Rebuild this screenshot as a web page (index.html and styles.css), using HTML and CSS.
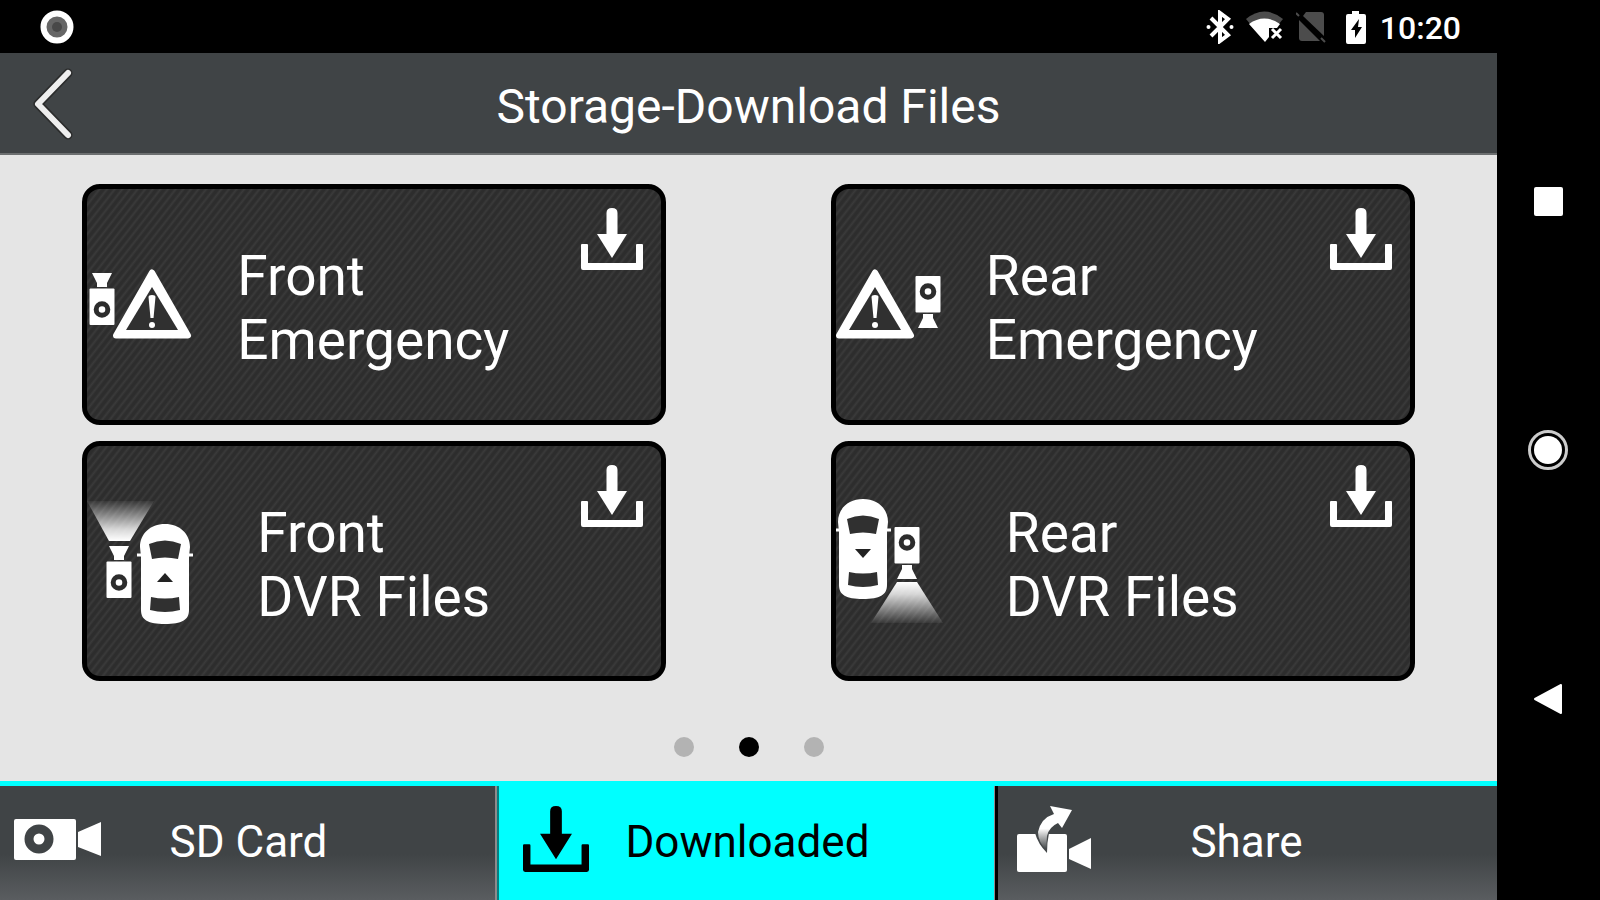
FILE: index.html
```
<!DOCTYPE html>
<html lang="en">
<head>
    <meta charset="UTF-8">
    <meta name="viewport" content="width=device-width, initial-scale=1.0">
    <title>Storage-Download Files</title>
    <link rel="stylesheet" href="styles.css">
</head>
<body>
    <!-- Shared icons -->
    <svg class="sprite" width="0" height="0" aria-hidden="true">
        <defs>
            <linearGradient id="beam" x1="0" y1="1" x2="0" y2="0">
                <stop offset="0" stop-color="#fff"/>
                <stop offset="0.3" stop-color="#fff" stop-opacity="0.8"/>
                <stop offset="1" stop-color="#fff" stop-opacity="0.05"/>
            </linearGradient>
            <linearGradient id="tail" x1="0" y1="0" x2="0" y2="1">
                <stop offset="0.5" stop-color="#fff"/>
                <stop offset="0.95" stop-color="#44484a"/>
            </linearGradient>
            <symbol id="download" viewBox="0 0 62 62">
                <path fill="currentColor" d="M31 0q5.500 0 5.500 5V26H46L31 50 16 26h9.500V5q0-5 5.500-5z"/>
                <path fill="currentColor" d="M0 37q0-1 1-1h5q1 0 1 1v18h48V37q0-1 1-1h5q1 0 1 1v23q0 2-2 2H2q-2 0-2-2z"/>
            </symbol>
            <g id="camera">
                <path fill="#fff" d="M-10-26H10L5-16V-12H-5V-16z"/>
                <rect fill="#fff" x="-12.500" y="-10.500" width="25" height="36.500" rx="1"/>
                <circle cx="0" cy="10.500" r="5.800" fill="#fff" stroke="#2c2c2c" stroke-width="5"/>
            </g>
            <g id="warning">
                <path fill="#fff" stroke="#fff" stroke-width="6" stroke-linejoin="round" d="M39 38.500L75 101.500H3z"/>
                <path fill="#303030" d="M39 53L65 96H13z"/>
                <path fill="#fff" d="M35.500 63q0-2 3.500-2t3.500 2l-2 21h-3z"/>
                <circle fill="#fff" cx="39" cy="91" r="3"/>
            </g>
            <g id="car">
                <path fill="#fff" d="M0-50C15-50 25-40 25-27L24-17V36C24 46 17 50 0 50S-24 46-24 36V-17L-25-27C-25-40-15-50 0-50z"/>
                <path stroke="#fff" stroke-width="3" d="M-28-19H28"/>
                <path fill="#303030" d="M-16-30Q0-37 16-30L13-15Q0-18-13-15z"/>
                <path fill="#303030" d="M-14 23Q0 26 14 23L15 36Q0 40-15 36z"/>
            </g>
        </defs>
    </svg>

    <div class="screen">
        <div class="app">
            <div class="status-bar">
                <svg class="record" width="34" height="34" viewBox="0 0 34 34" aria-hidden="true">
                    <circle cx="17" cy="17" r="13.500" fill="#666" stroke="#fff" stroke-width="6"/>
                    <circle cx="17" cy="17" r="5" fill="#484848"/>
                </svg>
                <svg width="28" height="34" viewBox="0 0 28 34" aria-hidden="true">
                    <path fill="none" stroke="#fff" stroke-width="4" d="M5 8L22 25 14 31V3L22 9 5 26"/>
                    <circle cx="2.500" cy="17" r="2" fill="#fff"/>
                    <circle cx="25.500" cy="17" r="2" fill="#fff"/>
                </svg>
                <svg width="38" height="34" viewBox="0 0 38 34" aria-hidden="true">
                    <path fill="#4c4c4c" d="M0 9Q18-6 37 9L32 15H5z"/>
                    <path fill="#fff" d="M3 14Q18 3 34 14L31 18H23V27L19 32z"/>
                    <path stroke="#fff" stroke-width="3" d="M26 19L35 28M35 19L26 28"/>
                </svg>
                <svg width="38" height="34" viewBox="0 0 38 34" aria-hidden="true">
                    <path fill="#4c4c4c" d="M10 2H25q3 0 3 3V26L7 6z"/>
                    <path fill="#4c4c4c" d="M3 10L24 31H6q-3 0-3-3z"/>
                    <path stroke="#4c4c4c" stroke-width="2" d="M0 3L3 6M25 28L29 32"/>
                </svg>
                <svg width="22" height="34" viewBox="0 0 22 34" aria-hidden="true">
                    <path fill="#fff" d="M6 1h7v3h5q2 0 2 2v26q0 2-2 2H2q-2 0-2-2V6q0-2 2-2h4z"/>
                    <path fill="#000" d="M13 9L5 20h4v8l7-11h-4z"/>
                </svg>
                <time class="clock">10:20</time>
            </div>

            <header class="title-bar">
                <button class="back" type="button" aria-label="Back">
                    <svg width="50" height="76" viewBox="0 0 50 76" aria-hidden="true">
                        <path fill="none" stroke="#2b2c2c" stroke-width="9" stroke-linecap="round" stroke-linejoin="round" d="M42 8L12 39 42 70"/>
                        <path fill="none" stroke="#eee" stroke-width="6" stroke-linecap="round" stroke-linejoin="round" d="M42 8L12 39 42 70"/>
                    </svg>
                </button>
                <h1>Storage-Download Files</h1>
            </header>

            <main>
                <div class="cards">
                    <button class="card" type="button">
                        <svg class="card-icon" width="110" height="140" viewBox="0 0 110 140" aria-hidden="true">
                            <use href="#camera" x="15" y="65"/>
                            <use href="#warning" x="26"/>
                        </svg>
                        <span class="card-text">Front<br>Emergency</span>
                        <svg class="card-download" width="62" height="62" aria-hidden="true"><use href="#download"/></svg>
                    </button>
                    <button class="card" type="button">
                        <svg class="card-icon" width="110" height="140" viewBox="0 0 110 140" aria-hidden="true">
                            <use href="#warning"/>
                            <use href="#camera" transform="translate(92 68) rotate(180)"/>
                        </svg>
                        <span class="card-text">Rear<br>Emergency</span>
                        <svg class="card-download" width="62" height="62" aria-hidden="true"><use href="#download"/></svg>
                    </button>
                    <button class="card dvr" type="button">
                        <svg class="card-icon" width="110" height="140" viewBox="0 0 110 140" aria-hidden="true">
                            <path fill="url(#beam)" d="M0 10H67L43 50H22z"/>
                            <use href="#camera" x="32" y="81"/>
                            <use href="#car" x="78" y="83"/>
                            <path fill="#222" d="M78 82L86 91H70z"/>
                        </svg>
                        <span class="card-text">Front<br>DVR Files</span>
                        <svg class="card-download" width="62" height="62" aria-hidden="true"><use href="#download"/></svg>
                    </button>
                    <button class="card dvr" type="button">
                        <svg class="card-icon" width="110" height="140" viewBox="0 0 110 140" aria-hidden="true">
                            <path fill="url(#beam)" transform="translate(71 111) rotate(180)" d="M-36-21H36L10 20H-10z"/>
                            <use href="#camera" transform="translate(71 62) rotate(180)"/>
                            <use href="#car" x="27" y="58"/>
                            <path fill="#222" d="M27 67L35 58H19z"/>
                        </svg>
                        <span class="card-text">Rear<br>DVR Files</span>
                        <svg class="card-download" width="62" height="62" aria-hidden="true"><use href="#download"/></svg>
                    </button>
                </div>
                <div class="pager">
                    <button class="dot" type="button" aria-label="Page 1"></button>
                    <button class="dot active" type="button" aria-label="Page 2"></button>
                    <button class="dot" type="button" aria-label="Page 3"></button>
                </div>
            </main>

            <nav class="tabs">
                <button class="tab" type="button">
                    <svg width="110" height="114" viewBox="0 0 110 114" aria-hidden="true">
                        <rect x="14" y="33" width="62" height="41" rx="2" fill="#fff"/>
                        <circle cx="39" cy="53" r="10" fill="#fff" stroke="#404446" stroke-width="9"/>
                        <path fill="#fff" d="M78 46L101 36V70L78 61z"/>
                    </svg>
                    <span>SD Card</span>
                </button>
                <button class="tab selected" type="button">
                    <svg width="110" height="114" viewBox="0 0 110 114" aria-hidden="true">
                        <use href="#download" x="24" y="20" width="66" height="66"/>
                    </svg>
                    <span>Downloaded</span>
                </button>
                <button class="tab" type="button">
                    <svg width="110" height="114" viewBox="0 0 110 114" aria-hidden="true">
                        <rect x="19" y="48" width="50" height="38" rx="2" fill="#fff"/>
                        <path fill="#fff" d="M71 63L93 52V83L71 73z"/>
                        <path fill="#44484a" d="M37 47Q40 58 49 67Q49 56 51 47z"/>
                        <path fill="url(#tail)" d="M52 20L74 24 64 42 60 37Q51 41 49 50 48 57 49 65 40 56 40 46 43 32 56 28z"/>
                    </svg>
                    <span>Share</span>
                </button>
            </nav>
        </div>

        <nav class="system-nav">
            <button type="button" aria-label="Recent apps">
                <svg width="42" height="42" viewBox="0 0 42 42" aria-hidden="true"><rect x="6" y="7" width="29" height="29" rx="2" fill="#fff"/></svg>
            </button>
            <button type="button" aria-label="Home">
                <svg width="42" height="42" viewBox="0 0 42 42" aria-hidden="true">
                    <circle cx="20" cy="21" r="18.500" fill="none" stroke="#ccc" stroke-width="3"/>
                    <circle cx="20" cy="21" r="14" fill="#fff"/>
                </svg>
            </button>
            <button type="button" aria-label="Back">
                <svg width="42" height="42" viewBox="0 0 42 42" aria-hidden="true"><path fill="#fff" stroke="#fff" stroke-width="2" stroke-linejoin="round" d="M7 21L33 7V35z"/></svg>
            </button>
        </nav>
    </div>
</body>
</html>
```
FILE: styles.css
```
* {
  box-sizing: border-box;
}

body {
  margin: 0;
  background: #000;
  color: #fff;
  font-family: Roboto, "Liberation Sans", sans-serif;
}

button {
  margin: 0;
  padding: 0;
  border: none;
  background: none;
  color: inherit;
  font: inherit;
  cursor: pointer;
}

svg {
  display: block;
  flex-shrink: 0;
}

.sprite {
  position: absolute;
}

.screen {
  display: grid;
  grid-template-columns: 1fr 103px;
  min-height: 100vh;
}

.app {
  display: flex;
  flex-direction: column;
}

/* Status Bar */
.status-bar {
  display: flex;
  align-items: center;
  gap: 12px;
  height: 53px;
  padding: 0 36px 0 40px;
}

.record {
  margin-right: auto;
}

.clock {
  font-size: 32px;
  font-weight: 500;
  padding-top: 3px;
}

/* Title Bar */
.title-bar {
  display: grid;
  grid-template-columns: 1fr auto 1fr;
  align-items: center;
  height: 102px;
  padding: 0 26px;
  background: #404446;
  border-bottom: 2px solid #6c6f70;
}

.back {
  justify-self: start;
}

.title-bar h1 {
  margin: 0;
  padding-top: 6px;
  font-size: 48px;
  font-weight: 400;
}

/* Cards */
main {
  flex: 1;
  display: flex;
  flex-direction: column;
  padding: 29px 0 24px;
  background: #e5e5e5;
}

.cards {
  flex: 1;
  display: grid;
  grid-template-columns: 1fr 1fr;
  grid-auto-rows: 1fr;
  row-gap: 16px;
}

.card {
  display: flex;
  align-items: center;
  gap: 40px;
  width: 78%;
  margin: 0 auto;
  padding-right: 18px;
  border: 5px solid #000;
  border-radius: 18px;
  background: repeating-linear-gradient(128deg, #2d2d2d 0, #2d2d2d 2px, #3a3a3a 4px, #2d2d2d 6px);
  text-align: left;
}

.card.dvr {
  gap: 60px;
}

.card-text {
  flex: 1;
  padding-top: 8px;
  font-size: 55px;
  line-height: 64px;
}

.card-download {
  align-self: flex-start;
  margin-top: 19px;
}

/* Page Dots */
.pager {
  display: flex;
  justify-content: center;
  gap: 45px;
  margin-top: 56px;
}

.dot {
  width: 20px;
  height: 20px;
  border-radius: 50%;
  background: #b3b3b3;
}

.dot.active {
  background: #000;
}

/* Bottom Tabs */
.tabs {
  display: grid;
  grid-template-columns: 1fr 1fr 1fr;
  border-top: 5px solid #0ff;
}

.tab {
  display: grid;
  grid-template-columns: 1fr auto 1fr;
  align-items: center;
  padding-right: 2px;
  background: linear-gradient(#404446 60%, #5a5d60);
  font-size: 44px;
}

.tab span {
  padding-bottom: 2px;
}

.tab:first-child {
  box-shadow: inset -2px 0 #087f80, inset -4px 0 #8f8a8c;
}

.tab.selected {
  background: #0ff;
  color: #000;
  box-shadow: inset -3px 0 #000, inset -4px 0 #8f8a8c;
}

/* System Navigation */
.system-nav {
  display: flex;
  flex-direction: column;
  padding: 77px 0;
}

.system-nav button {
  flex: 1;
  display: flex;
  align-items: center;
  justify-content: center;
}
```
